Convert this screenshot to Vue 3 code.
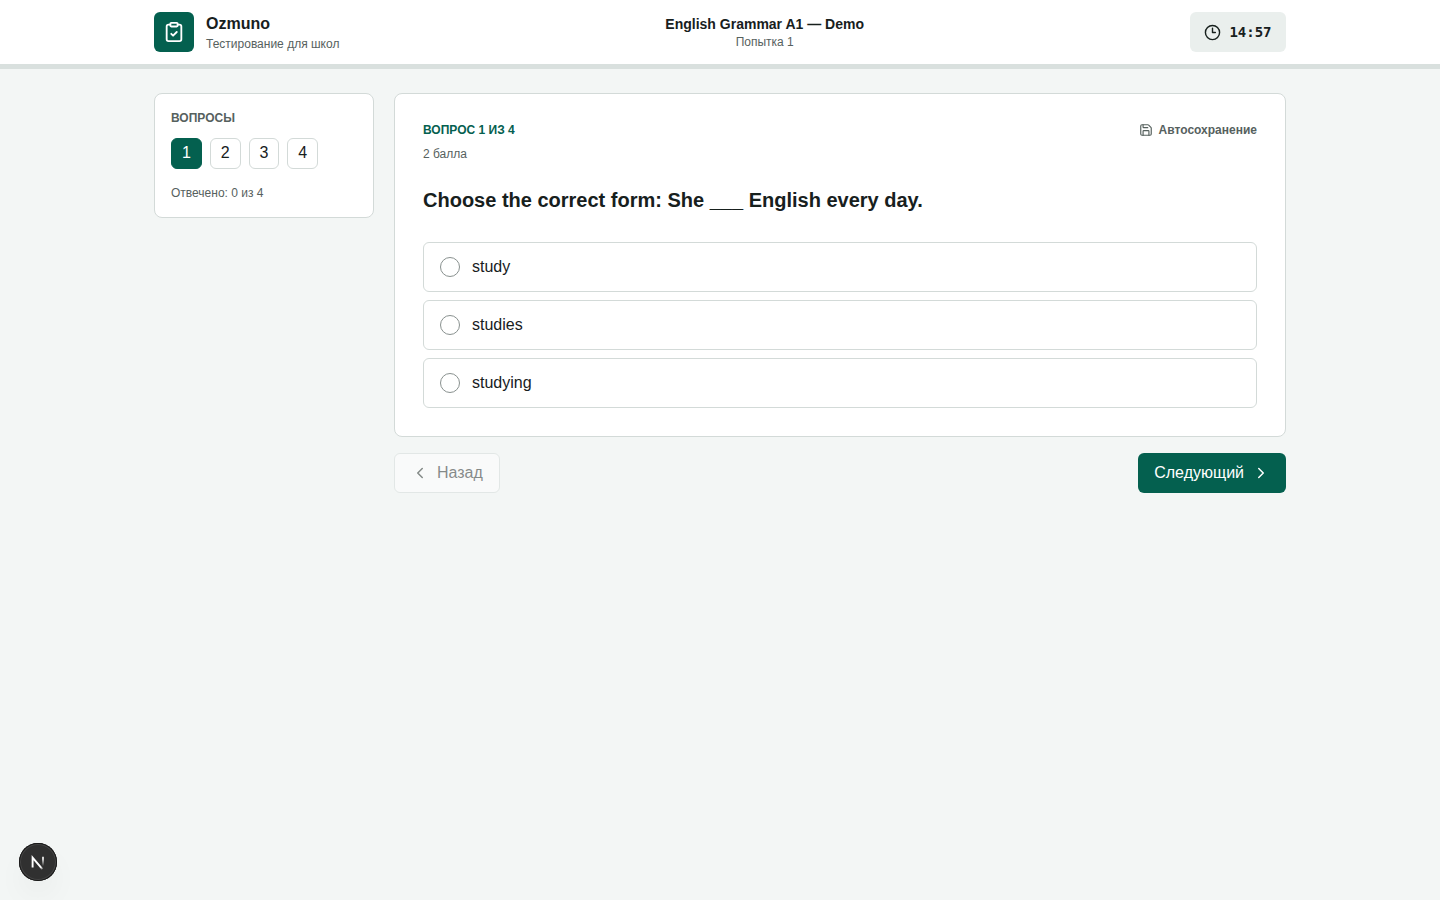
<script setup>
import { ref } from 'vue'

const questions = [1, 2, 3, 4]
const options = ['study', 'studies', 'studying']
const current = ref(1)
const answer = ref(null)
</script>

<template>
  <div class="page">
    <header class="topbar">
      <div class="topbar-inner">
        <div class="brand">
          <span class="logo">
            <svg width="22" height="22" viewBox="0 0 24 24" class="stroke">
              <rect x="8" y="2" width="8" height="4" rx="1" />
              <path d="M16 4h2a2 2 0 0 1 2 2v14a2 2 0 0 1-2 2H6a2 2 0 0 1-2-2V6a2 2 0 0 1 2-2h2" />
              <path d="m9 14 2 2 4-4" />
            </svg>
          </span>
          <div>
            <div class="brand-name">Ozmuno</div>
            <div class="small">Тестирование для школ</div>
          </div>
        </div>
        <div class="test-title">
          <div class="test-name">English Grammar A1 — Demo</div>
          <div class="small">Попытка 1</div>
        </div>
        <div class="timer">
          <svg width="17" height="17" viewBox="0 0 24 24" class="stroke">
            <circle cx="12" cy="12" r="10" />
            <path d="M12 6v6h4" />
          </svg>
          <span>14:57</span>
        </div>
      </div>
    </header>

    <main class="layout">
      <aside class="panel sidebar">
        <h2 class="side-title">ВОПРОСЫ</h2>
        <div class="numbers">
          <button
            v-for="n in questions"
            :key="n"
            type="button"
            class="number"
            :class="{ active: n === current }"
            @click="current = n"
          >{{ n }}</button>
        </div>
        <p class="small">Отвечено: 0 из 4</p>
      </aside>

      <section class="content">
        <article class="panel question">
          <div class="question-head">
            <div>
              <div class="counter">ВОПРОС 1 ИЗ 4</div>
              <div class="small">2 балла</div>
            </div>
            <div class="autosave">
              <svg width="14" height="14" viewBox="0 0 24 24" class="stroke">
                <path d="M15.2 3a2 2 0 0 1 1.4.6l3.8 3.8a2 2 0 0 1 .6 1.4V19a2 2 0 0 1-2 2H5a2 2 0 0 1-2-2V5a2 2 0 0 1 2-2z" />
                <path d="M17 21v-7a1 1 0 0 0-1-1H8a1 1 0 0 0-1 1v7" />
                <path d="M7 3v4a1 1 0 0 0 1 1h7" />
              </svg>
              <span>Автосохранение</span>
            </div>
          </div>
          <h1 class="prompt">Choose the correct form: She ___ English every day.</h1>
          <div class="options">
            <label v-for="o in options" :key="o" class="option">
              <input v-model="answer" type="radio" name="answer" :value="o" class="radio" />
              <span>{{ o }}</span>
            </label>
          </div>
        </article>
        <nav class="pager">
          <button type="button" class="btn back" disabled>
            <svg width="18" height="18" viewBox="0 0 24 24" class="stroke"><path d="m15 18-6-6 6-6" /></svg>
            Назад
          </button>
          <button type="button" class="btn next">
            Следующий
            <svg width="18" height="18" viewBox="0 0 24 24" class="stroke"><path d="m9 18 6-6-6-6" /></svg>
          </button>
        </nav>
      </section>
    </main>

    <button type="button" class="dev" aria-label="Next.js">
      <svg width="38" height="38" viewBox="0 0 38 38" fill="none">
        <defs>
          <linearGradient id="diag" x1="20" y1="19" x2="25" y2="26" gradientUnits="userSpaceOnUse">
            <stop offset="0.6" stop-color="#fff" />
            <stop offset="1" stop-color="#fff" stop-opacity="0.1" />
          </linearGradient>
          <linearGradient id="bar" x1="24" y1="13" x2="24" y2="23" gradientUnits="userSpaceOnUse">
            <stop offset="0.3" stop-color="#fff" />
            <stop offset="1" stop-color="#fff" stop-opacity="0" />
          </linearGradient>
        </defs>
        <path d="M13.6 24.5V14.6L23.4 26.2" stroke="url(#diag)" stroke-width="1.9" />
        <path d="M24 13.8V23" stroke="url(#bar)" stroke-width="1.6" />
      </svg>
    </button>
  </div>
</template>

<style>
body {
  margin: 0;
  background: #f3f6f5;
}
</style>

<style scoped>
.page {
  min-height: 100vh;
  background: #f3f6f5;
  color: #17201d;
  font: 16px/24px "Liberation Sans", Arial, sans-serif;
}
.page * {
  box-sizing: border-box;
}
h1,
h2,
p {
  margin: 0;
}
button {
  font: inherit;
  cursor: pointer;
}
.stroke {
  display: block;
  flex: none;
  fill: none;
  stroke: currentColor;
  stroke-width: 2;
  stroke-linecap: round;
  stroke-linejoin: round;
}
.topbar {
  background: #fff;
  border-bottom: 5px solid #d9e0de;
}
.topbar-inner {
  display: flex;
  align-items: center;
  justify-content: space-between;
  max-width: 1180px;
  margin: 0 auto;
  padding: 12px 24px;
}
.brand {
  display: flex;
  align-items: center;
  gap: 12px;
}
.logo {
  display: grid;
  place-items: center;
  width: 40px;
  height: 40px;
  border-radius: 6px;
  background: #04604f;
  color: #fff;
}
.brand-name {
  font-weight: 700;
}
.small {
  font-size: 12px;
  line-height: 16px;
  color: #56615e;
}
.test-title {
  text-align: center;
}
.test-name {
  font-size: 14px;
  line-height: 20px;
  font-weight: 700;
}
.timer {
  display: flex;
  align-items: center;
  justify-content: center;
  gap: 8px;
  min-width: 96px;
  height: 40px;
  padding: 0 12px;
  border-radius: 6px;
  background: #eaefed;
  font: 700 14px/20px "DejaVu Sans Mono", monospace;
}
.layout {
  display: grid;
  grid-template-columns: 220px minmax(0, 1fr);
  align-items: start;
  gap: 20px;
  max-width: 1180px;
  margin: 0 auto;
  box-sizing: border-box;
  padding: 24px;
}
.panel {
  background: #fff;
  border: 1px solid #d3dad8;
  border-radius: 8px;
}
.sidebar {
  padding: 16px;
}
.side-title {
  font-size: 12px;
  line-height: 16px;
  color: #56615e;
}
.numbers {
  display: grid;
  grid-template-columns: repeat(5, 1fr);
  gap: 8px;
  margin: 12px 0 16px;
}
.number {
  aspect-ratio: 1;
  padding: 0;
  border: 1px solid #d3dad8;
  border-radius: 6px;
  background: #fff;
  color: inherit;
}
.number.active {
  background: #04604f;
  border-color: #04604f;
  color: #fff;
}
.question {
  padding: 28px;
}
.question-head {
  display: flex;
  justify-content: space-between;
  align-items: flex-start;
}
.counter {
  margin-bottom: 8px;
  font-size: 12px;
  line-height: 16px;
  font-weight: 700;
  color: #04604f;
}
.autosave {
  display: flex;
  align-items: center;
  gap: 6px;
  font-size: 12px;
  line-height: 16px;
  font-weight: 700;
  color: #56615e;
}
.prompt {
  margin: 24px 0 28px;
  font-size: 20px;
  line-height: 28px;
}
.options {
  display: grid;
  gap: 8px;
}
.option {
  display: flex;
  align-items: center;
  gap: 12px;
  padding: 12px 16px;
  border: 1px solid #d3dad8;
  border-radius: 6px;
  cursor: pointer;
}
.radio {
  appearance: none;
  width: 20px;
  height: 20px;
  margin: 0;
  border: 1px solid #89918f;
  border-radius: 50%;
  background: #fff;
}
.radio:checked {
  border: 6px solid #04604f;
}
.pager {
  display: flex;
  justify-content: space-between;
  margin-top: 16px;
}
.btn {
  display: flex;
  align-items: center;
  gap: 8px;
  height: 40px;
  padding: 0 16px;
  border: 0;
  border-radius: 6px;
}
.back {
  border: 1px solid #d3dad8;
  background: #fff;
  color: #17201d;
  opacity: 0.5;
  cursor: default;
}
.next {
  background: #04604f;
  color: #fff;
}
.dev {
  position: fixed;
  left: 19px;
  bottom: 19px;
  width: 38px;
  height: 38px;
  padding: 0;
  border: 0;
  border-radius: 50%;
  background: #303030;
  box-shadow: inset 0 0 0 1px #181818, inset 0 0 0 2px #444, 0 16px 32px -8px rgba(0, 0, 0, 0.1);
}
.dev svg {
  display: block;
}
</style>
